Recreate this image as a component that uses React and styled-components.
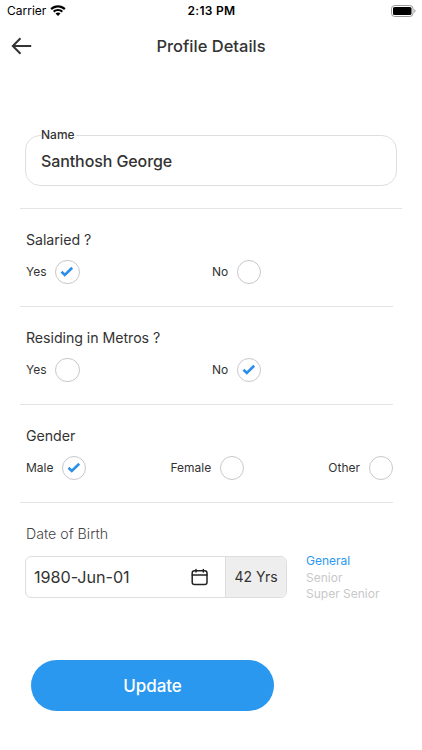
import styled, { createGlobalStyle } from "styled-components";

const GlobalStyle = createGlobalStyle`
  * { box-sizing: border-box; }
  body {
    margin: 0;
    background: #fff;
    font-family: Inter, "Liberation Sans", sans-serif;
    color: #333;
  }
`;
const Screen = styled.div`
  width: 422px;
  height: 750px;
  overflow: hidden;
  background: #fff;
`;
const StatusBar = styled.div`
  display: grid;
  grid-template-columns: 1fr auto 1fr;
  align-items: center;
  height: 22px;
  padding: 0 6px 0 7px;
  color: #000;
`;
const Carrier = styled.div`
  display: flex;
  align-items: center;
  gap: 4px;
`;
const BatterySlot = styled.div`
  display: flex;
  justify-content: flex-end;
`;
const Text = styled.span`
  white-space: nowrap;
  font-size: ${(props) => props.$size}px;
  font-weight: ${(props) => props.$weight || 400};
  letter-spacing: ${(props) => props.$track || 0}px;
  line-height: 20px;
`;
const Header = styled.header`
  display: grid;
  grid-template-columns: 40px 1fr 40px;
  align-items: center;
  height: 48px;
  svg { margin-left: 11px; }
`;
const Title = styled(Text)`
  text-align: center;
`;
const NameField = styled.fieldset`
  width: 372px;
  height: 59px;
  margin: 57px 0 22px 25px;
  padding: 8px 15px 0;
  border: 1px solid #dedede;
  border-radius: 15px;
`;
const NameLegend = styled.legend`
  height: 16px;
  padding: 0 1px 0 0;
  display: flex;
  align-items: center;
`;
const Divider = styled.hr`
  width: ${(props) => props.$width}px;
  height: 1px;
  margin: 0 0 0 20px;
  border: 0;
  background: #e4e4e4;
`;
const Section = styled.section`
  display: flex;
  flex-direction: column;
  height: 97px;
  padding: 21px 29px 0 26px;
  gap: 9.5px;
`;
const Options = styled.div`
  display: ${(props) => (props.$spread ? "flex" : "grid")};
  grid-template-columns: 186px 1fr;
  justify-content: space-between;
`;
const Option = styled.label`
  display: flex;
  align-items: center;
  gap: 8.5px;
`;
const Circle = styled.span`
  display: flex;
  align-items: center;
  justify-content: center;
  width: 24.5px;
  height: 24.5px;
  border: 1px solid #c8c8cc;
  border-radius: 50%;
`;
const BirthTitle = styled(Text)`
  display: block;
  margin: 21px 0 12px 26px;
  color: #444;
`;
const BirthRow = styled.div`
  display: flex;
  align-items: flex-start;
  height: 42px;
  margin-left: 25px;
`;
const DateBox = styled.div`
  display: flex;
  width: 262px;
  height: 42px;
  border: 1px solid #dedede;
  border-radius: 6px;
  overflow: hidden;
`;
const DateValue = styled.div`
  display: flex;
  flex: 1;
  align-items: center;
  justify-content: space-between;
  padding: 0 16.5px 0 8px;
`;
const Age = styled.div`
  display: flex;
  align-items: center;
  justify-content: center;
  width: 61px;
  background: #eee;
  border-left: 1px solid #dedede;
`;
const Categories = styled.div`
  display: flex;
  flex-direction: column;
  margin: -3px 0 0 19px;
`;
const Category = styled(Text)`
  height: 16.6px;
  line-height: 16.6px;
  color: ${(props) => (props.$active ? "#2b98f0" : "#c8c8c8")};
`;
const UpdateButton = styled.button`
  display: flex;
  align-items: center;
  justify-content: center;
  width: 243px;
  height: 51px;
  margin: 62px 0 0 31px;
  padding: 0;
  border: 0;
  border-radius: 26px;
  background: #2b98f0;
  color: #fff;
  font-family: inherit;
`;

const WifiIcon = () => (
  <svg width="16" height="12" viewBox="0 0 16 12" fill="#000">
    <path d="M8 0.3C5.1 0.3 2.4 1.4 0.4 3.3L1.9 4.9C3.5 3.4 5.7 2.5 8 2.5s4.5.9 6.1 2.4l1.5-1.6C13.6 1.4 10.9.3 8 .3Z" />
    <path d="M8 4C6.1 4 4.3 4.7 3 5.9L4.5 7.5C5.4 6.6 6.7 6.1 8 6.1s2.6.5 3.5 1.4L13 5.9C11.7 4.7 9.9 4 8 4Z" />
    <path d="M8 7.5c-.9 0-1.8.3-2.5.9L8 11.1l2.5-2.7C9.8 7.8 8.9 7.5 8 7.5Z" />
  </svg>
);
const BatteryIcon = () => (
  <svg width="25" height="12" viewBox="0 0 25 12">
    <rect x="0.5" y="0.5" width="21.5" height="11" rx="3.2" fill="#fff" stroke="#999" />
    <rect x="2" y="2" width="18.5" height="8" rx="1.6" fill="#000" />
    <path d="M23.3 4.2v3.6c.8-.3 1.2-1 1.2-1.8s-.4-1.5-1.2-1.8Z" fill="#999" />
  </svg>
);
const BackIcon = () => (
  <svg width="22" height="18" viewBox="0 0 22 18" fill="none" stroke="#333" strokeWidth="2">
    <path d="M20.2 9H2M9.5 1.2L1.800 9l7.700 7.800" />
  </svg>
);
const CheckIcon = () => (
  <svg width="14" height="12" viewBox="0 0 14 12" fill="none" stroke="#2b8fe8" strokeWidth="2.6">
    <path d="M1.5 5.8L4.8 9L12.2 1.800" />
  </svg>
);
const CalendarIcon = () => (
  <svg width="18" height="18" viewBox="0 0 18 18" fill="none" stroke="#222" strokeWidth="1.5" strokeLinecap="round">
    <rect x="1.2" y="2.8" width="14.8" height="13.700" rx="2.3" />
    <path d="M1.2 7H16M5 1.500v2.500M12.300 1.500v2.500" />
  </svg>
);

const groups = [
  { title: "Salaried ?", options: ["Yes", "No"], selected: "Yes" },
  { title: "Residing in Metros ?", options: ["Yes", "No"], selected: "No" },
  { title: "Gender", options: ["Male", "Female", "Other"], selected: "Male" },
];

const OptionGroup = ({ title, options, selected }) => (
  <>
    <Section>
      <Text $size={14.2} $track={-0.05}>{title}</Text>
      <Options $spread={options.length > 2}>
        {options.map((name) => (
          <Option key={name}>
            <Text $size={12}>{name}</Text>
            <Circle>{name === selected && <CheckIcon />}</Circle>
          </Option>
        ))}
      </Options>
    </Section>
    <Divider $width={373} />
  </>
);

export default function App() {
  return (
    <Screen>
      <GlobalStyle />
      <StatusBar>
        <Carrier>
          <Text $size={12}>Carrier</Text>
          <WifiIcon />
        </Carrier>
        <Text $size={12} $weight={600} $track={0.3}>2:13 PM</Text>
        <BatterySlot><BatteryIcon /></BatterySlot>
      </StatusBar>
      <Header>
        <BackIcon />
        <Title as="h1" $size={16.5} $weight={500}>Profile Details</Title>
      </Header>
      <NameField>
        <NameLegend><Text $size={12} $weight={500}>Name</Text></NameLegend>
        <Text $size={16} $weight={500} $track={-0.1}>Santhosh George</Text>
      </NameField>
      <Divider $width={382} />
      {groups.map((group) => (
        <OptionGroup key={group.title} {...group} />
      ))}
      <BirthTitle $size={14.2} $weight={300}>Date of Birth</BirthTitle>
      <BirthRow>
        <DateBox>
          <DateValue>
            <Text $size={16.2} $track={-0.05}>1980-Jun-01</Text>
            <CalendarIcon />
          </DateValue>
          <Age><Text $size={14}>42 Yrs</Text></Age>
        </DateBox>
        <Categories>
          <Category $size={12} $active>General</Category>
          <Category $size={12}>Senior</Category>
          <Category $size={12}>Super Senior</Category>
        </Categories>
      </BirthRow>
      <UpdateButton><Text $size={17} $weight={500} $track={-0.1}>Update</Text></UpdateButton>
    </Screen>
  );
}
